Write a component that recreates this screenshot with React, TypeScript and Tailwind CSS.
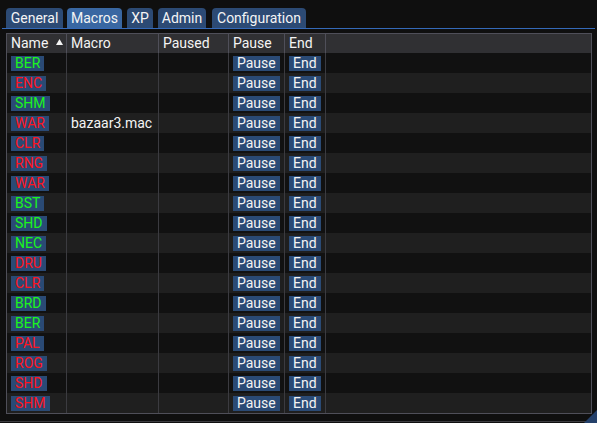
import React from "react";

type Row = { name: string; ok: boolean; macro?: string };

const rows: Row[] = [
  { name: "BER", ok: true },
  { name: "ENC", ok: false },
  { name: "SHM", ok: true },
  { name: "WAR", ok: false, macro: "bazaar3.mac" },
  { name: "CLR", ok: false },
  { name: "RNG", ok: false },
  { name: "WAR", ok: false },
  { name: "BST", ok: true },
  { name: "SHD", ok: true },
  { name: "NEC", ok: true },
  { name: "DRU", ok: false },
  { name: "CLR", ok: false },
  { name: "BRD", ok: true },
  { name: "BER", ok: true },
  { name: "PAL", ok: false },
  { name: "ROG", ok: false },
  { name: "SHD", ok: false },
  { name: "SHM", ok: false },
];

// widths/offsets read off the screenshot
const tabs = [
  { label: "General", cls: "ml-[6px] w-[57px]" },
  { label: "Macros", cls: "ml-[4px] w-[55px]", active: true },
  { label: "XP", cls: "ml-[5px] w-[26px]" },
  { label: "Admin", cls: "ml-[5px] w-[48px]" },
  { label: "Configuration", cls: "ml-[6px] w-[94px]" },
];

function Chip({ children, className = "" }: { children: React.ReactNode; className?: string }) {
  return (
    <span className={"inline-block h-[15px] leading-[15px] px-1 bg-[#2a4a75] " + className}>
      {children}
    </span>
  );
}

export default function App() {
  return (
    <div className="relative w-[597px] h-[423px] overflow-hidden bg-[#0f0f0f] text-[14px] text-[#f4f4f4] font-['Roboto',sans-serif]">
      <div className="flex pt-2">
        {tabs.map((t) => (
          <div
            key={t.label}
            className={
              "h-5 rounded-t-[4px] leading-5 text-center " +
              t.cls +
              (t.active ? " bg-[#3967a2]" : " bg-[#2c4a74]")
            }
          >
            {t.label}
          </div>
        ))}
      </div>
      <div className="mx-[2px] h-px bg-[#3469b8]" />

      <div className="mt-1 ml-[6px] w-[586px] border border-[#4f4f59]">
        <div className="grid grid-cols-[60px_92px_70px_56px_41px_1fr] h-[19px] bg-[#303033] leading-[19px]">
          <div className="flex items-center justify-between pl-1 pr-[3px] border-r border-[#4f4f59]">
            <span>Name</span>
            <svg width="7" height="6" viewBox="0 0 7 6" className="mb-[3px]">
              <path d="M3.5 0 L7 6 L0 6 Z" fill="#f4f4f4" />
            </svg>
          </div>
          <div className="pl-1 border-r border-[#4f4f59]">Macro</div>
          <div className="pl-1 border-r border-[#4f4f59]">Paused</div>
          <div className="pl-1 border-r border-[#4f4f59]">Pause</div>
          <div className="pl-1 border-r border-[#4f4f59]">End</div>
          <div />
        </div>
        {rows.map((r, i) => (
          <div
            key={i}
            className={
              "grid grid-cols-[60px_92px_70px_56px_41px_1fr] h-5 " +
              (i % 2 ? "bg-[#1f1f1f]" : "bg-[#111111]")
            }
          >
            <div className="flex items-center pl-1 border-r border-[#3b3b40]">
              <Chip className={r.ok ? "text-[#1cf51c]" : "text-[#ff1420]"}>{r.name}</Chip>
            </div>
            <div className="flex items-center pl-1 border-r border-[#3b3b40]">{r.macro}</div>
            <div className="border-r border-[#3b3b40]" />
            <div className="flex items-center pl-1 border-r border-[#3b3b40]">
              <Chip>Pause</Chip>
            </div>
            <div className="flex items-center pl-1 border-r border-[#3b3b40]">
              <Chip>End</Chip>
            </div>
            <div />
          </div>
        ))}
      </div>

      <div className="mt-[7px] h-px bg-[#3c3c40]" />

      <svg width="13" height="13" viewBox="0 0 13 13" className="absolute right-0 bottom-0">
        <path d="M13 0 L13 13 L0 13 Z" fill="#24406a" />
      </svg>
    </div>
  );
}
